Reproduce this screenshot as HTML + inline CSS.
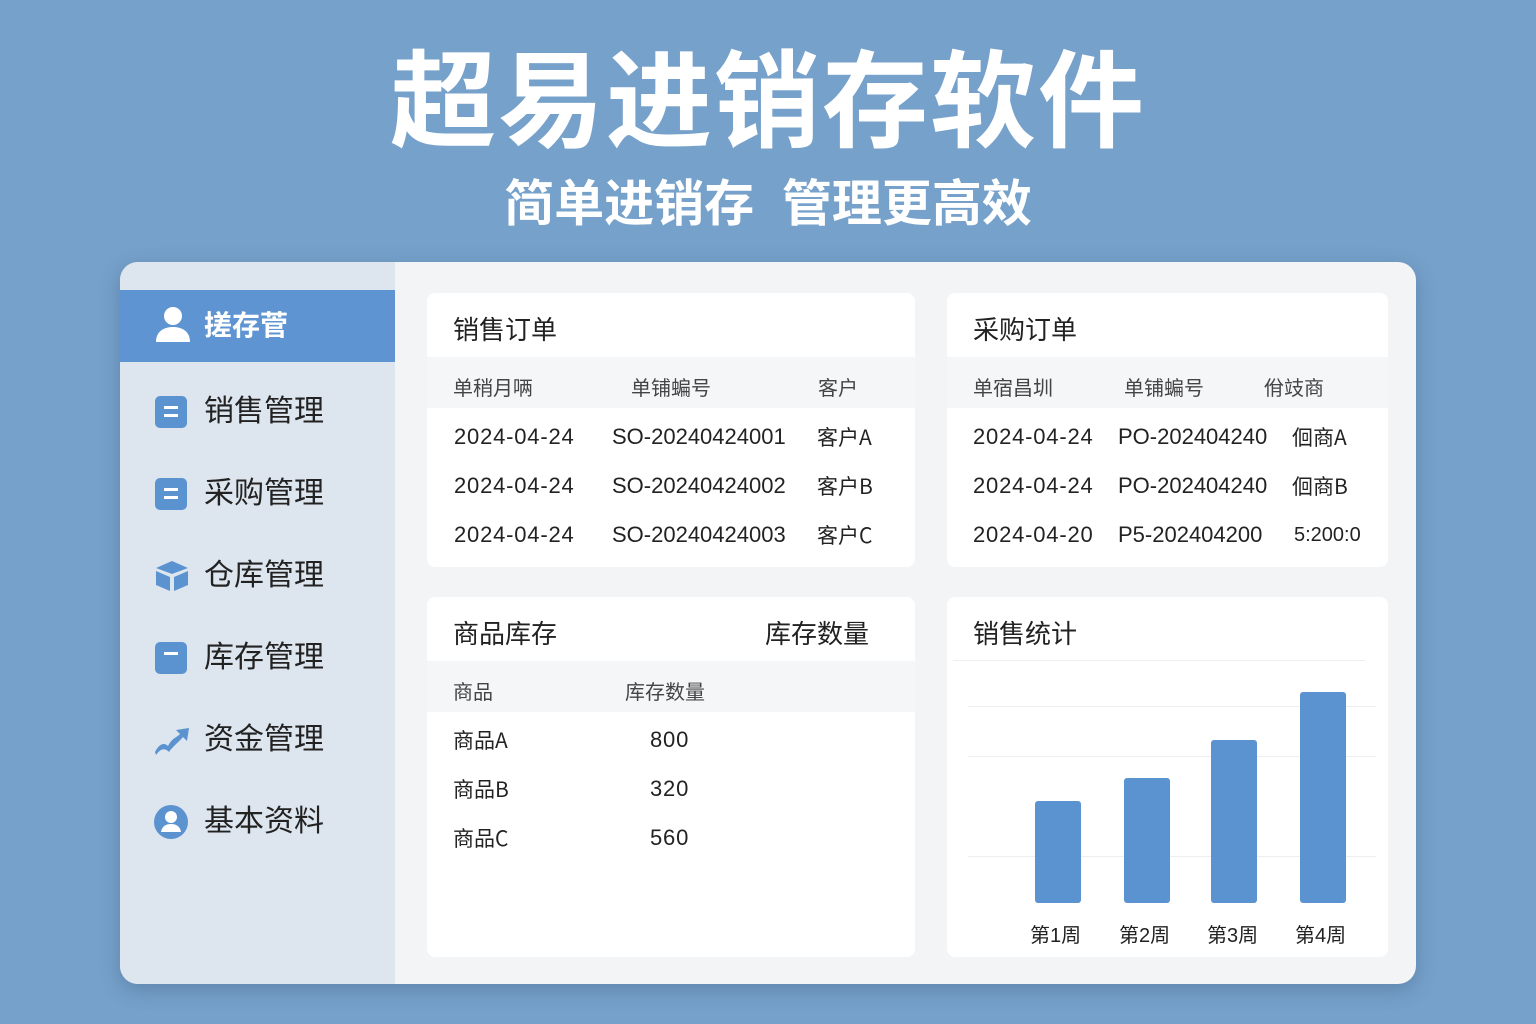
<!DOCTYPE html>
<html><head><meta charset="utf-8"><style>
*{margin:0;padding:0;box-sizing:border-box}
body{width:1536px;height:1024px;background:#76a1ca;position:relative;overflow:hidden;font-family:"Liberation Sans","Noto Sans CJK SC",sans-serif;color:#222}
.a{position:absolute;white-space:nowrap}
.title{left:0;width:1536px;text-align:center;top:38px;font-size:106px;font-weight:700;color:#fff;letter-spacing:2px;line-height:130px}
.sub{left:0;width:1536px;text-align:center;top:172px;font-size:50px;font-weight:700;color:#fff;line-height:64px}
.panel{left:120px;top:262px;width:1296px;height:722px;background:#f3f4f6;border-radius:18px;overflow:hidden;box-shadow:0 6px 20px rgba(40,70,110,.3)}
.side{left:0;top:0;width:275px;height:722px;background:#dde5ee}
.act{left:0;top:28px;width:275px;height:72px;background:#5d94d1}
.nav{font-size:30px;color:#222;left:84px;line-height:40px}
.card{background:#fff;border-radius:8px}
.hd{background:#f5f6f8}
.t{font-size:22px;letter-spacing:0.8px;line-height:30px}
.c{font-family:"Noto Sans CJK SC",sans-serif;font-size:21px;line-height:30px}
.h{font-size:26px}
.s{font-size:20px;color:#444}
.bar{background:#5b93d0;border-radius:3px;width:46px}
.gl{height:1px;background:#eceef1;left:848px;width:408px}
</style></head><body>
<div class="a title">超易进销存软件</div>
<div class="a sub">简单进销存&nbsp; 管理更高效</div>
<div class="a panel">
 <div class="a side"></div>
 <div class="a act"></div>
 <svg class="a" style="left:34px;top:42px" width="38" height="40" viewBox="0 0 38 40"><circle cx="19" cy="12" r="9" fill="#fff"/><path d="M2 38c0-10 7-15 17-15s17 5 17 15z" fill="#fff"/></svg>
 <div class="a nav" style="top:44px;color:#fff;font-weight:700;font-size:28px">搓存菅</div>
 <svg class="a" style="left:35px;top:134px" width="32" height="32"><rect width="32" height="32" rx="5" fill="#5b93d0"/><rect x="9" y="10" width="14" height="3" fill="#fff"/><rect x="9" y="18" width="14" height="3" fill="#fff"/></svg>
 <div class="a nav" style="top:130px">销售管理</div>
 <svg class="a" style="left:35px;top:216px" width="32" height="32"><rect width="32" height="32" rx="5" fill="#5b93d0"/><rect x="9" y="10" width="14" height="3" fill="#fff"/><rect x="9" y="18" width="14" height="3" fill="#fff"/></svg>
 <div class="a nav" style="top:212px">采购管理</div>
 <svg class="a" style="left:35px;top:298px" width="34" height="32" viewBox="0 0 34 32"><path d="M17 1 33 8 17 14 1 8z" fill="#5b93d0"/><path d="M1 11 15 17V31L1 25z" fill="#5b93d0"/><path d="M33 11 19 17V31L33 25z" fill="#5b93d0"/></svg>
 <div class="a nav" style="top:294px">仓库管理</div>
 <svg class="a" style="left:35px;top:380px" width="32" height="32"><rect width="32" height="32" rx="5" fill="#5b93d0"/><rect x="9" y="10" width="14" height="3" fill="#fff"/></svg>
 <div class="a nav" style="top:376px">库存管理</div>
 <svg class="a" style="left:34px;top:462px" width="36" height="32" viewBox="0 0 36 32"><path d="M1 28C5 20 10 18 14 22 18 14 22 14 26 10L22 6 35 4 33 17 29 13C24 19 19 22 15 28 11 24 7 24 2 31z" fill="#5b93d0"/></svg>
 <div class="a nav" style="top:458px">资金管理</div>
 <svg class="a" style="left:34px;top:543px" width="34" height="34"><circle cx="17" cy="17" r="17" fill="#5b93d0"/><circle cx="17" cy="12" r="6" fill="#fff"/><path d="M7 27c1-6 5-8 10-8s9 2 10 8z" fill="#fff"/></svg>
 <div class="a nav" style="top:540px">基本资料</div>

 <div class="a card" style="left:307px;top:31px;width:488px;height:274px"></div>
 <div class="a hd" style="left:307px;top:95px;width:488px;height:51px"></div>
 <div class="a h" style="left:333px;top:48px">销售订单</div>
 <div class="a s" style="left:333px;top:110px">单稍月唡</div>
 <div class="a s" style="left:511px;top:110px">单铺蝙号</div>
 <div class="a s" style="left:698px;top:110px">客户</div>
 <div class="a t" style="left:334px;top:160px">2024-04-24</div><div class="a t" style="left:492px;top:160px;letter-spacing:0">SO-20240424001</div><div class="a c" style="left:697px;top:160px">客户A</div>
 <div class="a t" style="left:334px;top:209px">2024-04-24</div><div class="a t" style="left:492px;top:209px;letter-spacing:0">SO-20240424002</div><div class="a c" style="left:697px;top:209px">客户B</div>
 <div class="a t" style="left:334px;top:258px">2024-04-24</div><div class="a t" style="left:492px;top:258px;letter-spacing:0">SO-20240424003</div><div class="a c" style="left:697px;top:258px">客户C</div>

 <div class="a card" style="left:827px;top:31px;width:441px;height:274px"></div>
 <div class="a hd" style="left:827px;top:95px;width:441px;height:51px"></div>
 <div class="a h" style="left:853px;top:48px">采购订单</div>
 <div class="a s" style="left:853px;top:110px">单宿昌圳</div>
 <div class="a s" style="left:1004px;top:110px">单铺蝙号</div>
 <div class="a s" style="left:1144px;top:110px">佾攱商</div>
 <div class="a t" style="left:853px;top:160px">2024-04-24</div><div class="a t" style="left:998px;top:160px;letter-spacing:0">PO-202404240</div><div class="a c" style="left:1172px;top:160px">佪商A</div>
 <div class="a t" style="left:853px;top:209px">2024-04-24</div><div class="a t" style="left:998px;top:209px;letter-spacing:0">PO-202404240</div><div class="a c" style="left:1172px;top:209px">佪商B</div>
 <div class="a t" style="left:853px;top:258px">2024-04-20</div><div class="a t" style="left:998px;top:258px;letter-spacing:0">P5-202404200</div><div class="a t" style="left:1174px;top:258px;font-size:20px;letter-spacing:0">5:200:0</div>

 <div class="a card" style="left:307px;top:335px;width:488px;height:360px"></div>
 <div class="a hd" style="left:307px;top:399px;width:488px;height:51px"></div>
 <div class="a h" style="left:333px;top:352px">商品库存</div>
 <div class="a h" style="left:645px;top:352px">库存数量</div>
 <div class="a s" style="left:333px;top:414px">商品</div>
 <div class="a s" style="left:505px;top:414px">库存数量</div>
 <div class="a c" style="left:333px;top:463px">商品A</div><div class="a t" style="left:530px;top:463px">800</div>
 <div class="a c" style="left:333px;top:512px">商品B</div><div class="a t" style="left:530px;top:512px">320</div>
 <div class="a c" style="left:333px;top:561px">商品C</div><div class="a t" style="left:530px;top:561px">560</div>

 <div class="a card" style="left:827px;top:335px;width:441px;height:360px"></div>
 <div class="a h" style="left:853px;top:352px">销售统计</div>
 <div class="a" style="left:833px;top:398px;width:412px;height:1px;background:#eceef1"></div>
 <div class="a gl" style="top:444px"></div>
 <div class="a gl" style="top:494px"></div>
 <div class="a gl" style="top:594px"></div>
 <div class="a bar" style="left:915px;top:539px;height:102px"></div>
 <div class="a bar" style="left:1004px;top:516px;height:125px"></div>
 <div class="a bar" style="left:1091px;top:478px;height:163px"></div>
 <div class="a bar" style="left:1180px;top:430px;height:211px"></div>
 <div class="a s" style="left:910px;top:657px;color:#222">第1周</div>
 <div class="a s" style="left:999px;top:657px;color:#222">第2周</div>
 <div class="a s" style="left:1087px;top:657px;color:#222">第3周</div>
 <div class="a s" style="left:1175px;top:657px;color:#222">第4周</div>
</div>
</body></html>
